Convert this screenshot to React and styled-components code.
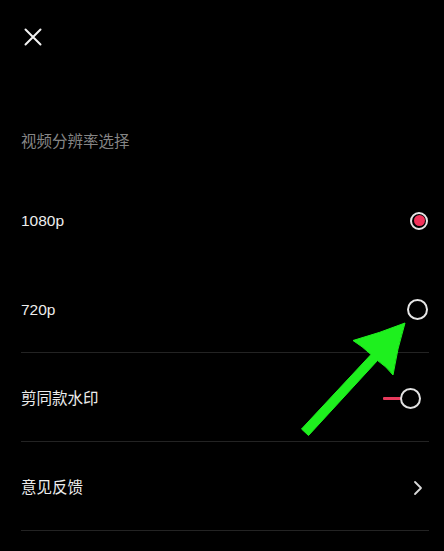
import React, { useState } from 'react';
import styled, { createGlobalStyle } from 'styled-components';

const GlobalStyle = createGlobalStyle`
  html, body {
    margin: 0;
    padding: 0;
    background: #000;
  }
  body {
    font-family: "Liberation Sans", "Noto Sans CJK SC", sans-serif;
    -webkit-font-smoothing: antialiased;
  }
`;

const Page = styled.div`
  position: relative;
  width: 444px;
  height: 551px;
  overflow: hidden;
  background: #000;
  color: #ececec;
`;

const TopBar = styled.div`
  height: 72px;
  display: flex;
  align-items: center;
  padding-left: 24px;
`;

const CloseButton = styled.button`
  width: 18px;
  height: 18px;
  padding: 0;
  margin-top: 1px;
  border: none;
  background: transparent;
  display: flex;
  align-items: center;
  justify-content: center;
  cursor: pointer;
`;

const SectionLabel = styled.div`
  padding: 60px 0 23px 21px;
  height: 20px;
  line-height: 20px;
  font-size: 15.5px;
  color: #858585;
`;

const List = styled.div`
  padding: 0 15px 0 21px;
`;

const Row = styled.div`
  box-sizing: border-box;
  height: 89px;
  padding-top: 3px;
  display: flex;
  align-items: center;
  justify-content: space-between;
  border-bottom: 1px solid ${(p) => (p.$divider ? '#232323' : 'transparent')};
`;

const RowLabel = styled.span`
  font-size: 15.5px;
  line-height: 20px;
  color: #ededed;
`;

const Radio = styled.span`
  box-sizing: border-box;
  width: ${(p) => (p.$checked ? 18 : 21)}px;
  height: ${(p) => (p.$checked ? 18 : 21)}px;
  margin-right: ${(p) => (p.$checked ? 1 : 1)}px;
  border-radius: 50%;
  border: 2px solid #e6e6e6;
  display: flex;
  align-items: center;
  justify-content: center;
  &::after {
    content: '';
    display: ${(p) => (p.$checked ? 'block' : 'none')};
    width: 11px;
    height: 11px;
    border-radius: 50%;
    background: #f0325a;
  }
`;

const Toggle = styled.span`
  display: flex;
  align-items: center;
  margin-right: 8px;
`;

const ToggleTrack = styled.span`
  width: 18px;
  height: 3px;
  background: #e83a5c;
  border-radius: 1px;
`;

const ToggleKnob = styled.span`
  box-sizing: border-box;
  width: 21px;
  height: 21px;
  border-radius: 50%;
  border: 2px solid #e2e2e2;
  margin-left: -1px;
`;

const Chevron = styled.span`
  display: flex;
  margin-right: 6px;
`;

const ArrowOverlay = styled.svg`
  position: absolute;
  left: 290px;
  top: 310px;
  width: 130px;
  height: 135px;
  pointer-events: none;
`;

export default function App() {
  const [resolution, setResolution] = useState('1080p');

  return (
    <Page>
      <GlobalStyle />
      <TopBar>
        <CloseButton aria-label="close">
          <svg width="18" height="18" viewBox="0 0 18 18">
            <path d="M1.5 1.5 L16.5 16.5 M16.5 1.5 L1.5 16.5" stroke="#f2f2f2" strokeWidth="2" strokeLinecap="round" />
          </svg>
        </CloseButton>
      </TopBar>

      <SectionLabel>视频分辨率选择</SectionLabel>

      <List>
        <Row onClick={() => setResolution('1080p')}>
          <RowLabel>1080p</RowLabel>
          <Radio $checked={resolution === '1080p'} />
        </Row>
        <Row $divider onClick={() => setResolution('720p')}>
          <RowLabel>720p</RowLabel>
          <Radio $checked={resolution === '720p'} />
        </Row>
        <Row $divider>
          <RowLabel>剪同款水印</RowLabel>
          <Toggle>
            <ToggleTrack />
            <ToggleKnob />
          </Toggle>
        </Row>
        <Row $divider>
          <RowLabel>意见反馈</RowLabel>
          <Chevron>
            <svg width="10" height="16" viewBox="0 0 10 16">
              <path d="M2 2 L8 8 L2 14" fill="none" stroke="#d8d8d8" strokeWidth="1.8" strokeLinecap="round" strokeLinejoin="round" />
            </svg>
          </Chevron>
        </Row>
      </List>

      {/* annotation arrow drawn over the list */}
      <ArrowOverlay viewBox="290 310 130 135">
        <path
          d="M301.5 429 L371 354.5 Q362 346 353 340.5 Q380 333 405 323 Q397 349 393 375 Q386 366 377.5 360.5 L308.5 435.5 Z"
          fill="#1ef01e"
          stroke="#1ef01e"
          strokeWidth="1"
          strokeLinejoin="round"
        />
      </ArrowOverlay>
    </Page>
  );
}
